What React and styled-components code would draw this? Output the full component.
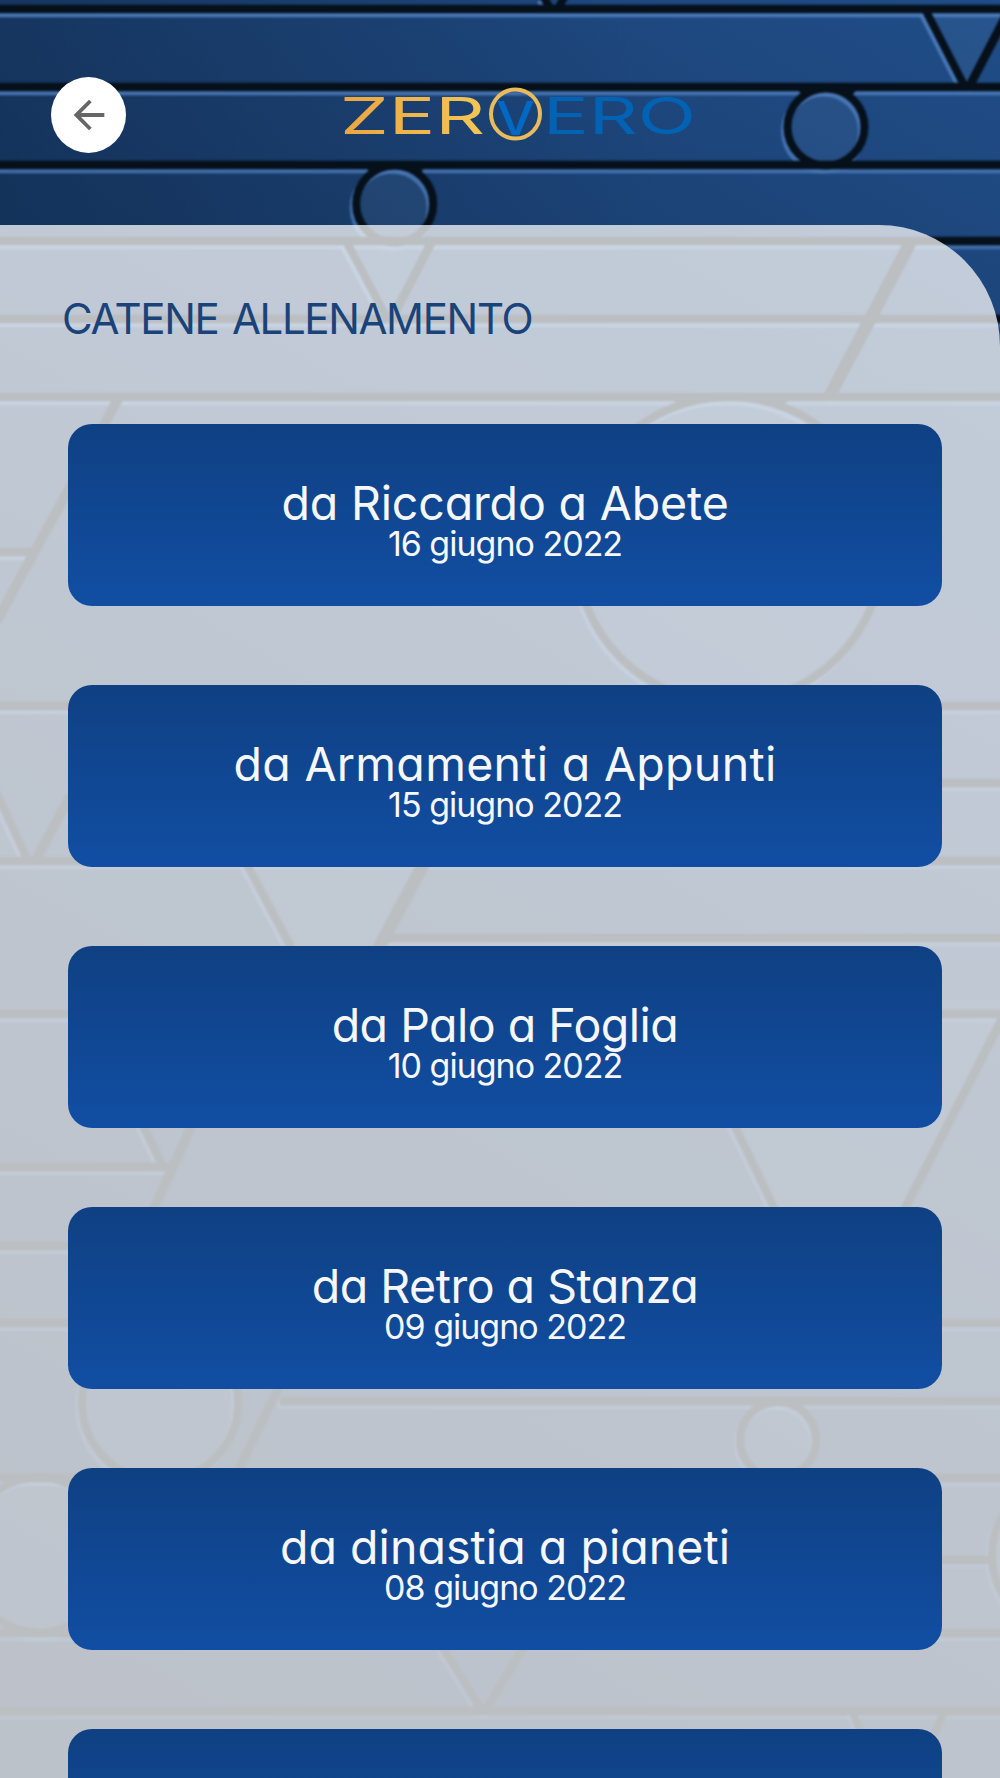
import styled, { createGlobalStyle } from 'styled-components';
import { MdArrowBack } from 'react-icons/md';

const GlobalStyle = createGlobalStyle`
  * {
    box-sizing: border-box;
  }

  body {
    margin: 0;
    background: #14315a;
    font-family: Inter, 'Open Sans', sans-serif;
    font-feature-settings: 'cv11';
  }
`;

const Screen = styled.div`
  display: grid;
  width: 1000px;
  height: 1778px;
  overflow: hidden;
`;

/* Pattern and page share the same grid cell */
const Pattern = styled.svg`
  grid-area: 1 / 1;
  display: block;
`;

const Page = styled.div`
  grid-area: 1 / 1;
  z-index: 1;
  display: flex;
  flex-direction: column;
  height: 1778px;
`;

const Header = styled.header`
  display: flex;
  align-items: flex-start;
  flex: 0 0 225px;
  padding: 77px 0 0 51px;
`;

const BackButton = styled.button`
  display: flex;
  align-items: center;
  justify-content: center;
  width: 75px;
  height: 76px;
  padding: 0;
  border: 0;
  border-radius: 50%;
  background-color: #fff;
  color: #666;
  font-size: 46px;
`;

const Logo = styled.svg`
  width: 370px;
  height: 64px;
  margin-left: 207px;
  margin-top: 5px;
`;

const Panel = styled.main`
  flex: 1;
  min-height: 0;
  padding: 69px 58px 0 68px;
  border-top-right-radius: 121px;
  background-color: rgba(250, 250, 250, 0.75);
`;

const Title = styled.h1`
  height: 50px;
  margin: 0 0 80px -6px;
  color: #1a4379;
  font-size: 42px;
  font-weight: 400;
  line-height: 50px;
  letter-spacing: -1.35px;
  word-spacing: 3px;
  white-space: nowrap;
`;

const ChainList = styled.div`
  display: flex;
  flex-direction: column;
  gap: 79px;
`;

const ChainCard = styled.div`
  display: flex;
  flex-direction: column;
  align-items: center;
  flex: 0 0 182px;
  padding-top: 54px;
  border-radius: 24px;
  background: linear-gradient(to bottom, #0f4083, #114ea3);
  color: #f7f7f9;
  white-space: nowrap;
`;

const ChainName = styled.div`
  font-size: 46.5px;
  line-height: 50px;
  letter-spacing: ${(props) => props.$tracking}px;
`;

const ChainDate = styled.div`
  font-size: 34px;
  line-height: 32px;
  letter-spacing: -1px;
`;

const chains = [
  { name: 'da Riccardo a Abete', date: '16 giugno 2022', tracking: -0.15 },
  { name: 'da Armamenti a Appunti', date: '15 giugno 2022', tracking: 0.3 },
  { name: 'da Palo a Foglia', date: '10 giugno 2022', tracking: -0.5 },
  { name: 'da Retro a Stanza', date: '09 giugno 2022', tracking: -0.5 },
  { name: 'da dinastia a pianeti', date: '08 giugno 2022', tracking: 0.05 },
];

// [x1, x2, y]
const rails = [
  [-20, 1020, 9], [-20, 1020, 87], [-20, 1020, 165], [-20, 1020, 241], [-20, 1020, 319], [-20, 1020, 397],
  [-20, 35, 552], [-20, 100, 706], [900, 1020, 706], [900, 1020, 783], [-20, 1020, 861],
  [388, 1020, 938], [-20, 100, 1014], [900, 1020, 1014], [-20, 168, 1167], [-20, 100, 1246],
  [-20, 100, 1323], [900, 1020, 1323], [280, 1020, 1401], [-20, 100, 1478], [900, 1020, 1478],
  [900, 990, 1560], [-20, 100, 1633], [900, 1020, 1633], [-20, 1020, 1711],
];

// [x1, y1, x2, y2, width]
const struts = [
  [543, -4, 550, 8, 8], [565, -4, 558, 8, 8],
  [925, 9, 965, 87, 8], [1008, 12, 969, 87, 9],
  [346, 241, 389, 322, 8], [432, 241, 392, 318, 9],
  [911, 241, 829, 397, 13],
  [119, 397, -4, 622, 10],
  [-4, 792, 28, 861, 8], [70, 796, 35, 861, 10],
  [245, 861, 295, 955, 8], [425, 861, 375, 955, 13],
  [137, 1113, 163, 1167, 8], [197, 1113, 152, 1212, 10],
  [727, 1110, 776, 1212, 8], [1004, 1015, 903, 1212, 9],
  [280, 1384, 236, 1474, 9],
  [442, 1646, 482, 1711, 8], [524, 1646, 485, 1711, 9],
  [852, 1711, 862, 1735, 7], [944, 1711, 934, 1735, 8],
];

// [cx, cy, r]
const rings = [
  [394.7, 204, 38.5], [826, 127, 38.5], [729, 550, 153], [160, 1403, 78],
  [778, 1440, 38], [42, 1555, 78], [1070, 1555, 78],
];

function Grooves() {
  return (
    <>
      {rails.map(([x1, x2, y]) => (
        <line key={`${x1}-${y}`} x1={x1} x2={x2} y1={y} y2={y} strokeWidth="8.5" />
      ))}
      {struts.map(([x1, y1, x2, y2, w]) => (
        <line key={`${x1}-${y1}`} x1={x1} x2={x2} y1={y1} y2={y2} strokeWidth={w} />
      ))}
      {rings.map(([cx, cy, r]) => (
        <circle key={cx} cx={cx} cy={cy} r={r} fill="none" strokeWidth="8" />
      ))}
    </>
  );
}

function Background() {
  return (
    <Pattern width="1000" height="1778" viewBox="0 0 1000 1778">
      <defs>
        <linearGradient id="base" gradientUnits="userSpaceOnUse" x1="1000" y1="0" x2="0" y2="1778">
          <stop offset="0" stopColor="#204d88" />
          <stop offset="0.25" stopColor="#1a3f70" />
          <stop offset="0.6" stopColor="#0e2c52" />
          <stop offset="1" stopColor="#071c3a" />
        </linearGradient>
        <linearGradient id="shade" gradientUnits="userSpaceOnUse" x1="0" y1="200" x2="640" y2="60">
          <stop offset="0" stopColor="#0e2440" stopOpacity="0.36" />
          <stop offset="1" stopColor="#0e2440" stopOpacity="0" />
        </linearGradient>
        <linearGradient id="highlight" gradientUnits="userSpaceOnUse" x1="0" y1="0" x2="0" y2="1778">
          <stop offset="0" stopColor="#4f7fc0" stopOpacity="0.9" />
          <stop offset="0.4" stopColor="#3a66a0" stopOpacity="0.65" />
          <stop offset="1" stopColor="#2d5488" stopOpacity="0.35" />
        </linearGradient>
        <filter
          id="soft"
          filterUnits="userSpaceOnUse"
          x="-20"
          y="-20"
          width="1040"
          height="1820"
          colorInterpolationFilters="sRGB"
        >
          <feGaussianBlur stdDeviation="1" />
        </filter>
      </defs>
      <rect width="1000" height="1778" fill="url(#base)" />
      <rect width="1000" height="225" fill="url(#shade)" />
      <g fill="#8fb0dc" fillOpacity="0.08">
        {rings.map(([cx, cy, r]) => (
          <circle key={cx} cx={cx} cy={cy} r={r} />
        ))}
        <polygon points="926,9 1010,9 967,87" />
        <polygon points="348,241 431,241 391,319" />
        <polygon points="245,861 425,861 375,955 295,955" />
        <polygon points="678,1000 1012,1000 903,1212 776,1212" />
      </g>
      <g filter="url(#soft)">
        <g stroke="url(#highlight)" transform="translate(-2.5 4)">
          <Grooves />
        </g>
        <g stroke="#06101a">
          <Grooves />
        </g>
        {/* fillets where a ring meets the rail above or below it */}
        <g fill="#06101a">
          <path d="M364 165H427L418 175Q395 162 372 175Z" />
          <path d="M796 87H859L850 98Q827 85 804 98Z" />
          <path d="M800 165H853L848 156Q827 169 806 156Z" />
          <path d="M368 241H422L416 233Q395 246 374 233Z" />
          <path d="M668 397H794L780 407Q730 389 682 407Z" />
          <path d="M755 1401H801L796 1410Q778 1396 760 1410Z" />
          <path d="M-4 1478H76L66 1488Q42 1474 10 1486Z" />
          <path d="M-4 1633H76L66 1622Q42 1636 10 1622Z" />
        </g>
      </g>
    </Pattern>
  );
}

function ZeroVeroLogo() {
  return (
    <Logo viewBox="333 82 370 64">
      <defs>
        <linearGradient id="gold" x1="0" y1="0" x2="1" y2="0">
          <stop offset="0" stopColor="#eba540" />
          <stop offset="1" stopColor="#f3c656" />
        </linearGradient>
      </defs>
      <g fontFamily="Inter, sans-serif" fontSize="50" fontWeight="400">
        <text x="340" y="134" textLength="145" lengthAdjust="spacingAndGlyphs" fill="url(#gold)">ZER</text>
        <text x="496" y="135" fontSize="47" fontWeight="500" textLength="39" lengthAdjust="spacingAndGlyphs" fill="#0069c4">V</text>
        <text x="543" y="134" textLength="153" lengthAdjust="spacingAndGlyphs" fill="#0263b5">ERO</text>
      </g>
      <circle cx="515.5" cy="114" r="24.5" fill="none" stroke="#e9bb5c" strokeWidth="4" />
    </Logo>
  );
}

export default function App() {
  return (
    <Screen>
      <GlobalStyle />
      <Background />
      <Page>
        <Header>
          <BackButton aria-label="Indietro">
            <MdArrowBack />
          </BackButton>
          <ZeroVeroLogo />
        </Header>
        <Panel>
          <Title>CATENE ALLENAMENTO</Title>
          <ChainList>
            {chains.map((chain) => (
              <ChainCard key={chain.name}>
                <ChainName $tracking={chain.tracking}>{chain.name}</ChainName>
                <ChainDate>{chain.date}</ChainDate>
              </ChainCard>
            ))}
            <ChainCard />
          </ChainList>
        </Panel>
      </Page>
    </Screen>
  );
}
